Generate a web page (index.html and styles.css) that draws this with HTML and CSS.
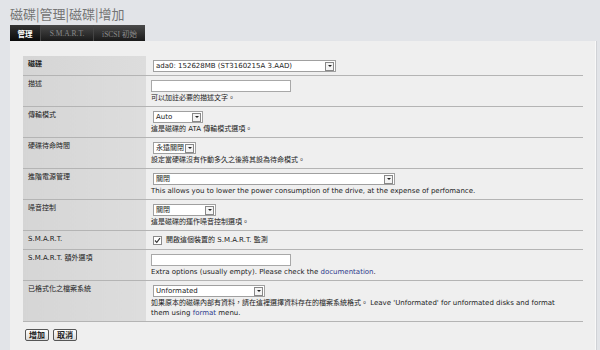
FILE: index.html
```html
<!DOCTYPE html>
<html>
<head>
    <link rel="stylesheet" href="styles.css">
</head>
<body>
    <div class="page">
        <h1 class="titulo">磁碟|管理|磁碟|增加</h1>
        <div class="abas">
            <span class="aba ativa">管理</span>
            <span class="aba">S.M.A.R.T.</span>
            <span class="aba">iSCSI 初始</span>
        </div>
        <div class="painel">
            <table class="form">
                <tr>
                    <td class="rotulo forte">磁碟</td>
                    <td class="valor">
                        <span class="sel w-disco"><span class="txt">ada0: 152628MB (ST3160215A 3.AAD)</span><span class="seta"></span></span>
                    </td>
                </tr>
                <tr>
                    <td class="rotulo">描述</td>
                    <td class="valor">
                        <span class="campo"></span>
                        <div class="dica">可以加註必要的描述文字。</div>
                    </td>
                </tr>
                <tr>
                    <td class="rotulo">傳輸模式</td>
                    <td class="valor">
                        <span class="sel w-auto"><span class="txt">Auto</span><span class="seta"></span></span>
                        <div class="dica">這是磁碟的 ATA 傳輸模式選項。</div>
                    </td>
                </tr>
                <tr>
                    <td class="rotulo">硬碟待命時間</td>
                    <td class="valor">
                        <span class="sel w-sempre"><span class="txt">永遠關閉</span><span class="seta"></span></span>
                        <div class="dica">設定當硬碟沒有作動多久之後將其設為待命模式。</div>
                    </td>
                </tr>
                <tr>
                    <td class="rotulo">進階電源管理</td>
                    <td class="valor">
                        <span class="sel w-energia"><span class="txt">關閉</span><span class="seta"></span></span>
                        <div class="dica">This allows you to lower the power consumption of the drive, at the expense of perfomance.</div>
                    </td>
                </tr>
                <tr>
                    <td class="rotulo">噪音控制</td>
                    <td class="valor">
                        <span class="sel w-ruido"><span class="txt">關閉</span><span class="seta"></span></span>
                        <div class="dica">這是磁碟的運作噪音控制選項。</div>
                    </td>
                </tr>
                <tr>
                    <td class="rotulo">S.M.A.R.T.</td>
                    <td class="valor">
                        <label class="check">
                            <span class="caixa"><svg width="7" height="7" viewBox="0 0 7 7"><path d="M1 3.5 L2.8 5.4 L6 1.2" fill="none" stroke="#333" stroke-width="1.1"/></svg></span>
                            開啟這個裝置的 S.M.A.R.T. 監測
                        </label>
                    </td>
                </tr>
                <tr>
                    <td class="rotulo">S.M.A.R.T. 額外選項</td>
                    <td class="valor">
                        <span class="campo"></span>
                        <div class="dica">Extra options (usually empty). Please check the <a href="#">documentation</a>.</div>
                    </td>
                </tr>
                <tr>
                    <td class="rotulo">已格式化之檔案系統</td>
                    <td class="valor">
                        <span class="sel w-fs"><span class="txt">Unformated</span><span class="seta"></span></span>
                        <div class="dica">如果原本的磁碟內部有資料，請在這裡選擇資料存在的檔案系統格式。 Leave 'Unformated' for unformated disks and format them using <a href="#">format</a> menu.</div>
                    </td>
                </tr>
            </table>

            <div class="botoes">
                <button type="button">增加</button>
                <button type="button">取消</button>
            </div>
        </div>
    </div>
</body>
</html>
```

FILE: styles.css
```css
body {
    margin: 0;
    padding: 0;
    background-color: #e2e4e8;
    font-family: Tahoma, "DejaVu Sans", "Noto Sans CJK TC", sans-serif;
    font-size: 7px;
    color: #222;
}
.page {
    padding: 6px 5px 0 10px;
    height: 344px;
    display: flex;
    flex-direction: column;
}
.titulo {
    margin: 0;
    height: 19px;
    font-family: "Noto Sans CJK TC", sans-serif;
    font-size: 13px;
    font-weight: normal;
    line-height: 16px;
    color: #747474;
}
.abas {
    display: flex;
    width: 135px;
    height: 16px;
    background: linear-gradient(#4a4a4a, #1a1a1a);
}
.aba {
    display: flex;
    align-items: center;
    justify-content: center;
    padding: 0 6px;
    color: #8a8a8a;
    font-family: "Liberation Serif", "Noto Sans CJK TC", serif;
    font-size: 7.5px;
    border-right: 1px solid #444;
}
.aba:nth-child(2) {
    width: 40px;
}
.aba:nth-child(3) {
    flex: 1;
    border-right: none;
}
.aba.ativa {
    width: 18px;
    color: #fff;
    font-weight: bold;
    font-family: "Noto Sans CJK TC", sans-serif;
    background: linear-gradient(#333, #0a0a0a);
}
.painel {
    flex: 1;
    width: 560px;
    padding: 15px 12px 0 13px;
    background-color: #efefef;
    border-right: 1px solid #f8f8f8;
    box-shadow: 1px 0 0 #d0d2d6;
}
.form {
    width: 560px;
    border-collapse: collapse;
}
.form td {
    vertical-align: top;
    border-top: 1px solid #fafafa;
    border-bottom: 1px solid #b4b4b4;
    line-height: 9px;
}
.form tr:first-child td {
    border-top: none;
}
.rotulo {
    width: 118px;
    padding: 4px 0 4px 5px;
    background: linear-gradient(to right, #d5d5d5, #dddddd);
    color: #222;
}
.rotulo.forte {
    font-weight: bold;
}
.valor {
    padding: 4px 0 3px 5px;
    background-color: #efefef;
}
.sel {
    display: inline-flex;
    align-items: center;
    height: 10px;
    margin: 0 0 0 2px;
    background-color: #fff;
    border: 1px solid #a0a0a0;
    box-sizing: content-box;
    vertical-align: top;
}
.sel .txt {
    flex: 1;
    padding-left: 2px;
    white-space: nowrap;
}
.seta {
    width: 7px;
    height: 7px;
    margin-right: 1px;
    border: 1px solid #888;
    background-color: #f4f4f4;
    display: flex;
    align-items: center;
    justify-content: center;
}
.seta::after {
    content: "";
    border-left: 2px solid transparent;
    border-right: 2px solid transparent;
    border-top: 2px solid #222;
}
.w-disco { width: 181px; }
.w-auto { width: 48px; }
.w-sempre { width: 41px; }
.w-energia { width: 240px; }
.w-ruido { width: 61px; }
.w-fs { width: 110px; }
.campo {
    display: inline-block;
    width: 138px;
    height: 10px;
    background-color: #fff;
    border: 1px solid #a8a8a8;
    vertical-align: top;
}
.dica {
    max-width: 412px;
    margin-top: 1px;
    line-height: 10px;
    color: #222;
}
.dica a {
    color: #2e3a8c;
    text-decoration: none;
}
.check {
    display: flex;
    align-items: center;
    gap: 4px;
    margin-left: 2px;
    height: 11px;
}
.caixa {
    display: inline-flex;
    width: 7px;
    height: 7px;
    background-color: #fff;
    border: 1px solid #8a8a8a;
}
.botoes {
    display: flex;
    gap: 4px;
    padding: 7px 0 0 2px;
}
button {
    height: 12px;
    padding: 0 3px;
    font-family: "Noto Sans CJK TC", sans-serif;
    font-size: 8px;
    font-weight: bold;
    line-height: 10px;
    color: #222;
    background: linear-gradient(#fdfdfd, #dadada);
    border: 1px solid #555;
    border-radius: 2px;
}
```
